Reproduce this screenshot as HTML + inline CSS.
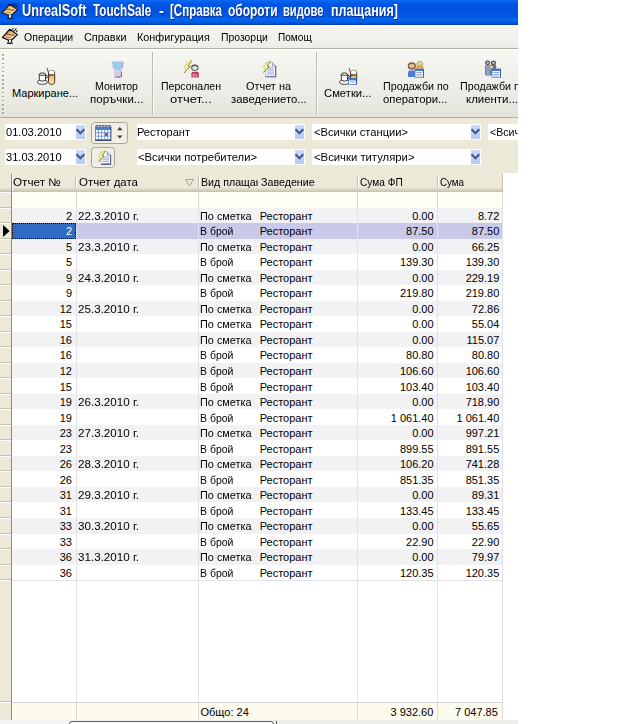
<!DOCTYPE html>
<html><head><meta charset="utf-8"><title>UnrealSoft TouchSale</title>
<style>
html,body{margin:0;padding:0;background:#fff;}
body{width:640px;height:724px;position:relative;overflow:hidden;font-family:"Liberation Sans",sans-serif;}
.b{position:absolute;box-sizing:border-box;}
.t{position:absolute;white-space:pre;line-height:1;font-family:"Liberation Sans",sans-serif;}
svg{position:absolute;overflow:visible;}
</style></head><body>

<div class="b" style="left:0px;top:0px;width:518px;height:25px;background:linear-gradient(to bottom,#0b6bf6 0px,#0560ea 2px,#0055e5 4px,#0052e0 10px,#0158e6 16px,#0366ee 20px,#0058de 22.5px,#003dba 25px);"></div>
<span class="t" style="left:21.50px;top:2.96px;font-size:16px;color:#fff;font-weight:bold;transform:scaleX(0.7972);transform-origin:0 0;text-shadow:1px 1px 0 #0a2a8a;">UnrealSoft</span>
<span class="t" style="left:92.80px;top:2.96px;font-size:16px;color:#fff;font-weight:bold;transform:scaleX(0.7301);transform-origin:0 0;text-shadow:1px 1px 0 #0a2a8a;">TouchSale</span>
<span class="t" style="left:159.00px;top:2.96px;font-size:16px;color:#fff;font-weight:bold;transform:scaleX(0.9384);transform-origin:0 0;text-shadow:1px 1px 0 #0a2a8a;">-</span>
<span class="t" style="left:170.00px;top:2.96px;font-size:16px;color:#fff;font-weight:bold;transform:scaleX(0.7225);transform-origin:0 0;text-shadow:1px 1px 0 #0a2a8a;">[Справка</span>
<span class="t" style="left:227.50px;top:2.96px;font-size:16px;color:#fff;font-weight:bold;transform:scaleX(0.7472);transform-origin:0 0;text-shadow:1px 1px 0 #0a2a8a;">обороти</span>
<span class="t" style="left:283.00px;top:2.96px;font-size:16px;color:#fff;font-weight:bold;transform:scaleX(0.6968);transform-origin:0 0;text-shadow:1px 1px 0 #0a2a8a;">видове</span>
<span class="t" style="left:330.60px;top:2.96px;font-size:16px;color:#fff;font-weight:bold;transform:scaleX(0.7826);transform-origin:0 0;text-shadow:1px 1px 0 #0a2a8a;">плащания]</span>
<div class="b" style="left:0px;top:25px;width:518px;height:23px;background:linear-gradient(to bottom,#fbfaf6 0px,#f3f2ec 3px,#f0efe9 20px,#eceae0 23px);"></div>
<div class="b" style="left:0px;top:25px;width:518px;height:1px;background:#f6ffff;"></div>
<div class="b" style="left:0px;top:47.6px;width:518px;height:1px;background:#b2b0a4;"></div>
<div class="b" style="left:0px;top:48.5px;width:518px;height:1px;background:#fff;"></div>
<span class="t" style="left:24.00px;top:32.09px;font-size:11px;color:#000;transform:scaleX(0.9569);transform-origin:0 0;">Операции</span>
<span class="t" style="left:83.75px;top:32.09px;font-size:11px;color:#000;transform:scaleX(0.9898);transform-origin:0 0;">Справки</span>
<span class="t" style="left:136.90px;top:32.09px;font-size:11px;color:#000;transform:scaleX(0.9861);transform-origin:0 0;">Конфигурация</span>
<span class="t" style="left:220.60px;top:32.09px;font-size:11px;color:#000;transform:scaleX(0.9451);transform-origin:0 0;">Прозорци</span>
<span class="t" style="left:277.50px;top:32.09px;font-size:11px;color:#000;transform:scaleX(0.9180);transform-origin:0 0;">Помощ</span>
<div class="b" style="left:0px;top:49.5px;width:518px;height:67.5px;background:linear-gradient(to bottom,#f7f7f3 0px,#f2f2ed 20px,#ebebe5 48px,#e2e2d8 67px);"></div>
<div class="b" style="left:0px;top:116.8px;width:518px;height:1px;background:#b3b09d;"></div>
<div class="b" style="left:0px;top:117.8px;width:518px;height:55.2px;background:#ece9d8;"></div>
<div class="b" style="left:2.4px;top:54.2px;width:1.6px;height:1.6px;background:#a9a79b;box-shadow:0.7px 0.7px 0 #fff;"></div>
<div class="b" style="left:2.4px;top:58.35px;width:1.6px;height:1.6px;background:#a9a79b;box-shadow:0.7px 0.7px 0 #fff;"></div>
<div class="b" style="left:2.4px;top:62.5px;width:1.6px;height:1.6px;background:#a9a79b;box-shadow:0.7px 0.7px 0 #fff;"></div>
<div class="b" style="left:2.4px;top:66.65px;width:1.6px;height:1.6px;background:#a9a79b;box-shadow:0.7px 0.7px 0 #fff;"></div>
<div class="b" style="left:2.4px;top:70.80000000000001px;width:1.6px;height:1.6px;background:#a9a79b;box-shadow:0.7px 0.7px 0 #fff;"></div>
<div class="b" style="left:2.4px;top:74.95px;width:1.6px;height:1.6px;background:#a9a79b;box-shadow:0.7px 0.7px 0 #fff;"></div>
<div class="b" style="left:2.4px;top:79.10000000000001px;width:1.6px;height:1.6px;background:#a9a79b;box-shadow:0.7px 0.7px 0 #fff;"></div>
<div class="b" style="left:2.4px;top:83.25px;width:1.6px;height:1.6px;background:#a9a79b;box-shadow:0.7px 0.7px 0 #fff;"></div>
<div class="b" style="left:2.4px;top:87.4px;width:1.6px;height:1.6px;background:#a9a79b;box-shadow:0.7px 0.7px 0 #fff;"></div>
<div class="b" style="left:2.4px;top:91.55000000000001px;width:1.6px;height:1.6px;background:#a9a79b;box-shadow:0.7px 0.7px 0 #fff;"></div>
<div class="b" style="left:2.4px;top:95.7px;width:1.6px;height:1.6px;background:#a9a79b;box-shadow:0.7px 0.7px 0 #fff;"></div>
<div class="b" style="left:2.4px;top:99.85000000000001px;width:1.6px;height:1.6px;background:#a9a79b;box-shadow:0.7px 0.7px 0 #fff;"></div>
<div class="b" style="left:2.4px;top:104.0px;width:1.6px;height:1.6px;background:#a9a79b;box-shadow:0.7px 0.7px 0 #fff;"></div>
<div class="b" style="left:2.4px;top:108.15px;width:1.6px;height:1.6px;background:#a9a79b;box-shadow:0.7px 0.7px 0 #fff;"></div>
<div class="b" style="left:2.4px;top:112.30000000000001px;width:1.6px;height:1.6px;background:#a9a79b;box-shadow:0.7px 0.7px 0 #fff;"></div>
<div class="b" style="left:151.9px;top:51.5px;width:1px;height:63px;background:#bcbbb1;"></div>
<div class="b" style="left:152.9px;top:51.5px;width:1px;height:63px;background:#fdfdfb;"></div>
<div class="b" style="left:315.9px;top:51.5px;width:1px;height:63px;background:#bcbbb1;"></div>
<div class="b" style="left:316.9px;top:51.5px;width:1px;height:63px;background:#fdfdfb;"></div>
<span class="t" style="left:12.00px;top:87.69px;font-size:11px;color:#000;">Маркиране...</span>
<span class="t" style="left:95.00px;top:80.99px;font-size:11px;color:#000;transform:scaleX(0.9602);transform-origin:0 0;">Монитор</span>
<span class="t" style="left:89.50px;top:93.69px;font-size:11px;color:#000;transform:scaleX(1.0503);transform-origin:0 0;">поръчки...</span>
<span class="t" style="left:160.50px;top:80.99px;font-size:11px;color:#000;transform:scaleX(0.9571);transform-origin:0 0;">Персонален</span>
<span class="t" style="left:169.50px;top:93.69px;font-size:11px;color:#000;transform:scaleX(1.1797);transform-origin:0 0;">отчет...</span>
<span class="t" style="left:246.25px;top:80.99px;font-size:11px;color:#000;transform:scaleX(0.9917);transform-origin:0 0;">Отчет на</span>
<span class="t" style="left:230.50px;top:93.69px;font-size:11px;color:#000;transform:scaleX(1.0311);transform-origin:0 0;">заведението...</span>
<span class="t" style="left:323.75px;top:87.69px;font-size:11px;color:#000;transform:scaleX(1.0229);transform-origin:0 0;">Сметки...</span>
<span class="t" style="left:383.00px;top:80.99px;font-size:11px;color:#000;transform:scaleX(0.9741);transform-origin:0 0;">Продажби по</span>
<span class="t" style="left:383.00px;top:93.69px;font-size:11px;color:#000;transform:scaleX(1.0294);transform-origin:0 0;">оператори...</span>
<div class="b" style="left:440px;top:50px;width:78px;height:66px;overflow:hidden;">
<span class="t" style="left:20.00px;top:30.99px;font-size:11px;color:#000;transform:scaleX(0.9741);transform-origin:0 0;">Продажби по</span>
<span class="t" style="left:25.80px;top:43.69px;font-size:11px;color:#000;transform:scaleX(1.0390);transform-origin:0 0;">клиенти...</span>
</div>
<div class="b" style="left:5px;top:124px;width:81.3px;height:16px;background:#fff;"></div><div class="b" style="left:76.3px;top:125px;width:8.8px;height:13.7px;background:linear-gradient(to bottom,#cbd9fa,#b9caf4);"></div><svg style="left:76.3px;top:124px" width="9" height="16" viewBox="0 0 9 16"><path d="M0.5 5.3 L4.4 9.3 L8.3 5.3" fill="none" stroke="#44588a" stroke-width="2.1"/></svg><span class="t" style="left:5.80px;top:126.89px;font-size:11px;color:#000;transform:scaleX(1.0098);transform-origin:0 0;">01.03.2010</span>
<div class="b" style="left:5px;top:149px;width:81.3px;height:16px;background:#fff;"></div><div class="b" style="left:76.3px;top:150px;width:8.8px;height:13.7px;background:linear-gradient(to bottom,#cbd9fa,#b9caf4);"></div><svg style="left:76.3px;top:149px" width="9" height="16" viewBox="0 0 9 16"><path d="M0.5 5.3 L4.4 9.3 L8.3 5.3" fill="none" stroke="#44588a" stroke-width="2.1"/></svg><span class="t" style="left:5.80px;top:151.89px;font-size:11px;color:#000;transform:scaleX(1.0098);transform-origin:0 0;">31.03.2010</span>
<div class="b" style="left:137px;top:124px;width:168px;height:16px;background:#fff;"></div><div class="b" style="left:295px;top:125px;width:8.8px;height:13.7px;background:linear-gradient(to bottom,#cbd9fa,#b9caf4);"></div><svg style="left:295px;top:124px" width="9" height="16" viewBox="0 0 9 16"><path d="M0.5 5.3 L4.4 9.3 L8.3 5.3" fill="none" stroke="#44588a" stroke-width="2.1"/></svg><span class="t" style="left:136.80px;top:126.89px;font-size:11px;color:#000;transform:scaleX(1.0027);transform-origin:0 0;">Ресторант</span>
<div class="b" style="left:137px;top:149px;width:168px;height:16px;background:#fff;"></div><div class="b" style="left:295px;top:150px;width:8.8px;height:13.7px;background:linear-gradient(to bottom,#cbd9fa,#b9caf4);"></div><svg style="left:295px;top:149px" width="9" height="16" viewBox="0 0 9 16"><path d="M0.5 5.3 L4.4 9.3 L8.3 5.3" fill="none" stroke="#44588a" stroke-width="2.1"/></svg><span class="t" style="left:137.50px;top:151.89px;font-size:11px;color:#000;transform:scaleX(1.0238);transform-origin:0 0;">&lt;Всички потребители&gt;</span>
<div class="b" style="left:312px;top:124px;width:169.2px;height:16px;background:#fff;"></div><div class="b" style="left:471.2px;top:125px;width:8.8px;height:13.7px;background:linear-gradient(to bottom,#cbd9fa,#b9caf4);"></div><svg style="left:471.2px;top:124px" width="9" height="16" viewBox="0 0 9 16"><path d="M0.5 5.3 L4.4 9.3 L8.3 5.3" fill="none" stroke="#44588a" stroke-width="2.1"/></svg><span class="t" style="left:313.50px;top:126.89px;font-size:11px;color:#000;transform:scaleX(1.0131);transform-origin:0 0;">&lt;Всички станции&gt;</span>
<div class="b" style="left:312px;top:149px;width:169.2px;height:16px;background:#fff;"></div><div class="b" style="left:471.2px;top:150px;width:8.8px;height:13.7px;background:linear-gradient(to bottom,#cbd9fa,#b9caf4);"></div><svg style="left:471.2px;top:149px" width="9" height="16" viewBox="0 0 9 16"><path d="M0.5 5.3 L4.4 9.3 L8.3 5.3" fill="none" stroke="#44588a" stroke-width="2.1"/></svg><span class="t" style="left:313.50px;top:151.89px;font-size:11px;color:#000;transform:scaleX(1.0273);transform-origin:0 0;">&lt;Всички титуляри&gt;</span>
<div class="b" style="left:488px;top:124px;width:30px;height:16px;overflow:hidden;background:#fff;"><span class="t" style="left:1.70px;top:2.89px;font-size:11px;color:#000;transform:scaleX(0.9621);transform-origin:0 0;">&lt;Всички</span></div>
<div class="b" style="left:91px;top:122px;width:36.5px;height:22px;border:1px solid #a9a697;border-radius:3.5px;background:#f1efe5;"></div>
<div class="b" style="left:91px;top:147.3px;width:23.5px;height:21px;border:1px solid #a9a697;border-radius:3.5px;background:#f1efe5;"></div>
<svg style="left:0px;top:0px;" width="20" height="20" viewBox="0 0 20 20"><defs><linearGradient id="gg1" x1="0" y1="0" x2="0.6" y2="1"><stop offset="0" stop-color="#e89018"/><stop offset="0.45" stop-color="#f4c060"/><stop offset="1" stop-color="#fff4d8"/></linearGradient></defs><path d="M2.3 12.6 L9.6 4.3 L17.4 9.6 L11.6 15 L8 15 Z" fill="url(#gg1)" stroke="#101030" stroke-width="1.1" stroke-linejoin="round"/><path d="M5 10.2 Q7.5 8.3 9.6 9.6 T14.4 9.6" fill="none" stroke="#9a5a10" stroke-width="1.2"/><path d="M6.2 12.2 Q8.5 13.4 11 12" fill="none" stroke="#9a5a10" stroke-width="0.8"/><rect x="8.6" y="15" width="2.6" height="3" fill="#fff"/><path d="M8.4 15 V17.2 M11.4 15 V17.2" stroke="#101030" stroke-width="1"/><path d="M7 18.2 H12.8" stroke="#101030" stroke-width="1.3"/><path d="M11.3 5.4 L13.5 3.1 M13.8 6.2 L16.6 3.2 M16 7.2 L17.7 5.3" stroke="#101030" stroke-width="1.05" stroke-dasharray="1.6 0.35"/></svg>
<svg style="left:0px;top:25.3px;" width="20" height="20" viewBox="0 0 20 20"><defs><linearGradient id="gg2" x1="0" y1="0" x2="0.6" y2="1"><stop offset="0" stop-color="#a87030"/><stop offset="0.45" stop-color="#ddb47c"/><stop offset="1" stop-color="#fbe8d0"/></linearGradient></defs><path d="M2.3 12.6 L9.6 4.3 L17.4 9.6 L11.6 15 L8 15 Z" fill="url(#gg2)" stroke="#000" stroke-width="1.1" stroke-linejoin="round"/><path d="M5 10.2 Q7.5 8.3 9.6 9.6 T14.4 9.6" fill="none" stroke="#8a5a20" stroke-width="1.2"/><path d="M6.2 12.2 Q8.5 13.4 11 12" fill="none" stroke="#8a5a20" stroke-width="0.8"/><rect x="8.6" y="15" width="2.6" height="3" fill="#fff"/><path d="M8.4 15 V17.2 M11.4 15 V17.2" stroke="#000" stroke-width="1"/><path d="M7 18.2 H12.8" stroke="#000" stroke-width="1.3"/><path d="M11.3 5.4 L13.5 3.1 M13.8 6.2 L16.6 3.2 M16 7.2 L17.7 5.3" stroke="#000" stroke-width="1.05" stroke-dasharray="1.6 0.35"/></svg>
<svg style="left:32px;top:62px;" width="24" height="24" viewBox="0 0 24 24"><defs><linearGradient id="gla" x1="0" y1="0" x2="0" y2="1"><stop offset="0" stop-color="#e89a38"/><stop offset="1" stop-color="#fde8b8"/></linearGradient></defs><ellipse cx="10.4" cy="20.1" rx="4.9" ry="2.2" fill="#fbfbfb" stroke="#222" stroke-width="0.85"/><path d="M7.3 12.2 V17.3 Q7.3 19.1 10.4 19.1 Q13.5 19.1 13.5 17.3 V12.2" fill="#fff" stroke="#222" stroke-width="0.9"/><ellipse cx="10.4" cy="12.2" rx="3.1" ry="1.25" fill="#f4f4f4" stroke="#222" stroke-width="0.9"/><path d="M13.6 13.2 Q15.6 13.2 15.4 14.8 Q15.2 16.2 13.6 16.2" fill="none" stroke="#222" stroke-width="0.9"/><rect x="16.5" y="8.3" width="6.2" height="14.2" rx="3" fill="url(#gla)" stroke="#2a2418" stroke-width="0.9"/><path d="M17 12.4 V9.5 Q19.6 7 22.2 9.5 V12.4 Z" fill="#fff"/><path d="M17.4 13 H21.8" stroke="#333" stroke-width="1.2"/><path d="M15 6 L17.6 14.3" stroke="#6a3048" stroke-width="0.9"/></svg>
<svg style="left:101px;top:54px;filter:blur(0.35px);" width="30" height="30" viewBox="0 0 30 30"><defs><radialGradient id="mon" cx="0.5" cy="0.45" r="0.6"><stop offset="0" stop-color="#86d4f8"/><stop offset="0.55" stop-color="#a0c6ea"/><stop offset="1" stop-color="#b0bce0"/></radialGradient></defs><path d="M10.9 7.5 H21.9 L21.5 14 Q21 16.4 18.6 16.7 H15 Q12.6 16.3 12 14 Z" fill="url(#mon)" stroke="#ccd8ee" stroke-width="0.8"/><path d="M21.9 7.8 L21.5 13.6" stroke="#8890bc" stroke-width="0.8"/><path d="M12.8 17 H20.6 V22.6 Q17 24 13.6 22.8 Z" fill="#d4cce8"/><path d="M20.4 17.5 V22.4 Q17 23.9 13.6 22.8" fill="none" stroke="#7c7298" stroke-width="1.1"/></svg>
<svg style="left:175px;top:54px;filter:blur(0.3px);" width="30" height="30" viewBox="0 0 30 30"><path d="M15.30 6.00 L16.90 6.70 L13.10 12.00 L15.30 12.50 L9.10 19.00 L10.70 13.90 L8.30 13.30 Z" fill="#f8f29c" stroke="#c2b660" stroke-width="0.5" stroke-linejoin="round"/><path d="M16.90 6.70 L13.10 12.00 L15.30 12.50 L9.10 19.00" fill="none" stroke="#7c7230" stroke-width="0.8" stroke-linejoin="round"/><ellipse cx="19.8" cy="13.8" rx="3.2" ry="2.7" fill="#e8e8e8" stroke="#707070" stroke-width="1.2"/><path d="M16.8 12.6 Q19.8 10 22.8 12.6" fill="none" stroke="#606060" stroke-width="1.4"/><path d="M16.4 23.4 V19.6 Q16.4 17.8 18.2 17.8 H21.8 Q23.8 17.8 23.8 19.6 V23.4 Z" fill="#c23456"/><path d="M18 20 H20 V22.4 H18 Z M21.6 20 V23" fill="none" stroke="#f0a8b8" stroke-width="0.9"/></svg>
<svg style="left:255px;top:54px;filter:blur(0.3px);" width="30" height="30" viewBox="0 0 30 30"><path d="M10.5 8.6 H17.5 L20.7 11.8 V22.799999999999997 H10.5 Z" fill="#f4f7fd" stroke="#b4bcd4" stroke-width="0.8" stroke-linejoin="round"/><path d="M17.5 8.6 V11.8 H20.7" fill="#c8d0e4" stroke="#7c86a4" stroke-width="0.7"/><rect x="12.1" y="13.40" width="6.999999999999999" height="0.9" fill="#8c9cc8"/><rect x="12.1" y="15.50" width="6.999999999999999" height="0.9" fill="#8c9cc8"/><rect x="12.1" y="17.60" width="6.999999999999999" height="0.9" fill="#8c9cc8"/><rect x="12.1" y="19.70" width="6.999999999999999" height="0.9" fill="#8c9cc8"/><path d="M10.5 22.799999999999997 H20.7 V11.8" fill="none" stroke="#5a6484" stroke-width="1.1"/><path d="M14.24 6.60 L15.71 7.24 L12.22 12.12 L14.24 12.58 L8.54 18.56 L10.01 13.87 L7.80 13.32 Z" fill="#f8f29c" stroke="#c2b660" stroke-width="0.5" stroke-linejoin="round"/><path d="M15.71 7.24 L12.22 12.12 L14.24 12.58 L8.54 18.56" fill="none" stroke="#7c7230" stroke-width="0.8" stroke-linejoin="round"/></svg>
<svg style="left:334px;top:62px;" width="24" height="24" viewBox="0 0 24 24"><defs><linearGradient id="glb" x1="0" y1="0" x2="0" y2="1"><stop offset="0" stop-color="#e89a38"/><stop offset="1" stop-color="#fde8b8"/></linearGradient></defs><ellipse cx="10.4" cy="20.1" rx="4.9" ry="2.2" fill="#fbfbfb" stroke="#222" stroke-width="0.85"/><path d="M7.3 12.2 V17.3 Q7.3 19.1 10.4 19.1 Q13.5 19.1 13.5 17.3 V12.2" fill="#fff" stroke="#222" stroke-width="0.9"/><ellipse cx="10.4" cy="12.2" rx="3.1" ry="1.25" fill="#f4f4f4" stroke="#222" stroke-width="0.9"/><path d="M13.6 13.2 Q15.6 13.2 15.4 14.8 Q15.2 16.2 13.6 16.2" fill="none" stroke="#222" stroke-width="0.9"/><rect x="16.5" y="8.3" width="6.2" height="14.2" rx="3" fill="url(#glb)" stroke="#2a2418" stroke-width="0.9"/><path d="M17 12.4 V9.5 Q19.6 7 22.2 9.5 V12.4 Z" fill="#fff"/><path d="M17.4 13 H21.8" stroke="#333" stroke-width="1.2"/><path d="M15 6 L17.6 14.3" stroke="#6a3048" stroke-width="0.9"/><rect x="14.2" y="16" width="8.5" height="6.8" fill="#4377cc"/><rect x="15.0" y="18.4" width="6.9" height="3.8" fill="#fff"/><rect x="15.899999999999999" y="19.50" width="5.1" height="0.85" fill="#7f98d0"/><rect x="21.9" y="17.2" width="0.8" height="5.6" fill="#2f559e"/></svg>
<svg style="left:401px;top:54px;filter:blur(0.3px);" width="30" height="30" viewBox="0 0 30 30"><ellipse cx="18.8" cy="9.9" rx="3.2" ry="2.6" fill="#d8d0a8" stroke="#b0a880" stroke-width="0.8"/><path d="M15.2 14.6 V12.8 Q15.2 11.6 16.6 11.6 H21 Q22.4 11.6 22.4 12.8 V14.6 Z" fill="#f0a030"/><ellipse cx="10.8" cy="12" rx="3.4" ry="3" fill="#d4b484" stroke="#7a5c50" stroke-width="1.4"/><path d="M8.6 11.6 H13" stroke="#f0dcb0" stroke-width="1"/><path d="M7 23 V18.4 Q7 16.6 9 16.6 H12.6 Q14.4 16.6 14.4 18.4 V23 Z" fill="#4f7fd4"/><rect x="13.6" y="14.6" width="9.4" height="9" fill="#4377cc"/><rect x="14.4" y="17.0" width="7.800000000000001" height="6.0" fill="#fff"/><rect x="15.299999999999999" y="18.10" width="6.0" height="0.85" fill="#7f98d0"/><rect x="15.299999999999999" y="19.85" width="6.0" height="0.85" fill="#7f98d0"/><rect x="15.299999999999999" y="21.60" width="6.0" height="0.85" fill="#7f98d0"/><rect x="22.2" y="15.799999999999999" width="0.8" height="7.8" fill="#2f559e"/></svg>
<svg style="left:478px;top:54px;filter:blur(0.3px);" width="30" height="30" viewBox="0 0 30 30"><rect x="7.2" y="10" width="5" height="12" rx="1.8" fill="#939bd4"/><path d="M7.4 11.5 V21" stroke="#60648c" stroke-width="0.8"/><rect x="12.8" y="10" width="5.4" height="12" rx="1.8" fill="#7a64a2"/><ellipse cx="9.7" cy="8.8" rx="2" ry="1.7" fill="#c4c4cc" stroke="#54545e" stroke-width="1.2"/><ellipse cx="15.5" cy="8.8" rx="2" ry="1.7" fill="#c4c4cc" stroke="#54545e" stroke-width="1.2"/><path d="M12.3 11 V21.5" stroke="#4c4c68" stroke-width="0.7"/><rect x="12.4" y="11.8" width="2.4" height="2.6" fill="#f2e264"/><rect x="12.4" y="14.4" width="1.8" height="2.8" fill="#62b66c"/><rect x="13.6" y="14.6" width="9.4" height="9" fill="#4377cc"/><rect x="14.4" y="17.0" width="7.800000000000001" height="6.0" fill="#fff"/><rect x="15.299999999999999" y="18.10" width="6.0" height="0.85" fill="#7f98d0"/><rect x="15.299999999999999" y="19.85" width="6.0" height="0.85" fill="#7f98d0"/><rect x="15.299999999999999" y="21.60" width="6.0" height="0.85" fill="#7f98d0"/><rect x="22.2" y="15.799999999999999" width="0.8" height="7.8" fill="#2f559e"/></svg>
<svg style="left:95px;top:124.7px;" width="17" height="16" viewBox="0 0 17 16"><defs><linearGradient id="cal" x1="0" y1="0" x2="0" y2="1"><stop offset="0" stop-color="#4c74c4"/><stop offset="1" stop-color="#7aa0e0"/></linearGradient></defs><rect x="0" y="1.2" width="16.2" height="14.4" fill="url(#cal)"/><rect x="0.6" y="0" width="15" height="1.4" fill="#fff"/><path d="M0.8 0.6 H15.6" stroke="#000" stroke-width="1.1" stroke-dasharray="0.8 0.72"/><rect x="1.00" y="5.00" width="2.2" height="2.4" fill="#fff"/><rect x="4.05" y="5.00" width="2.2" height="2.4" fill="#fff"/><rect x="7.10" y="5.00" width="2.2" height="2.4" fill="#fff"/><rect x="10.15" y="5.00" width="2.2" height="2.4" fill="#fff"/><rect x="13.20" y="5.00" width="2.2" height="2.4" fill="#fff"/><rect x="1.00" y="8.30" width="2.2" height="2.4" fill="#fff"/><rect x="4.05" y="8.30" width="2.2" height="2.4" fill="#fff"/><rect x="7.10" y="8.30" width="2.2" height="2.4" fill="#fff"/><rect x="10.15" y="8.30" width="2.2" height="2.4" fill="#e02818"/><rect x="13.20" y="8.30" width="2.2" height="2.4" fill="#fff"/><rect x="1.00" y="11.60" width="2.2" height="2.4" fill="#fff"/><rect x="4.05" y="11.60" width="2.2" height="2.4" fill="#fff"/><rect x="7.10" y="11.60" width="2.2" height="2.4" fill="#fff"/><rect x="10.15" y="11.60" width="2.2" height="2.4" fill="#fff"/><rect x="13.20" y="11.60" width="2.2" height="2.4" fill="#fff"/><rect x="0" y="14.8" width="16.2" height="1" fill="#1c2c5c"/><rect x="15.6" y="1.4" width="0.7" height="14" fill="#2c4484"/></svg>
<svg style="left:116px;top:126px" width="8" height="14" viewBox="0 0 8 14"><path d="M1 4.2 L3.8 1 L6.6 4.2 Z M1 9.4 L3.8 12.6 L6.6 9.4 Z" fill="#44402c"/></svg>
<svg style="left:96px;top:148px;" width="20" height="20" viewBox="0 0 20 20"><path d="M5 3.8 H11.399999999999999 L14.6 7.0 V16.4 H5 Z" fill="#f4f7fd" stroke="#b4bcd4" stroke-width="0.8" stroke-linejoin="round"/><path d="M11.399999999999999 3.8 V7.0 H14.6" fill="#c8d0e4" stroke="#7c86a4" stroke-width="0.7"/><rect x="6.6" y="8.60" width="6.3999999999999995" height="0.9" fill="#8c9cc8"/><rect x="6.6" y="10.70" width="6.3999999999999995" height="0.9" fill="#8c9cc8"/><rect x="6.6" y="12.80" width="6.3999999999999995" height="0.9" fill="#8c9cc8"/><rect x="6.6" y="14.90" width="6.3999999999999995" height="0.9" fill="#8c9cc8"/><path d="M5 16.4 H14.6 V7.0" fill="none" stroke="#5a6484" stroke-width="1.1"/><path d="M8.02 2.40 L9.40 3.00 L6.13 7.56 L8.02 7.99 L2.69 13.58 L4.06 9.19 L2.00 8.68 Z" fill="#f8f29c" stroke="#c2b660" stroke-width="0.5" stroke-linejoin="round"/><path d="M9.40 3.00 L6.13 7.56 L8.02 7.99 L2.69 13.58" fill="none" stroke="#7c7230" stroke-width="0.8" stroke-linejoin="round"/></svg>
<div class="b" style="left:0px;top:173px;width:518px;height:551px;background:#fff;"></div>
<div class="b" style="left:0px;top:173px;width:502.5px;height:18.5px;background:linear-gradient(to bottom,#d8d5c4 0px,#f1efe2 0.8px,#ece9d8 2.5px,#ece9d8 14.5px,#e2decd 15.5px,#d6d2c2 17px,#c9c5b4 18.5px);"></div>
<div class="b" style="left:0px;top:191.5px;width:12px;height:528.2px;background:#ece9d8;"></div>
<div class="b" style="left:12px;top:191.5px;width:490.5px;height:16.1px;background:#fffef3;"></div>
<div class="b" style="left:12px;top:207.6px;width:490.5px;height:15.52px;background:#f2f2f4;"></div>
<span class="t" style="left:65.88px;top:210.79px;font-size:11px;color:#000;">2</span>
<span class="t" style="left:77.90px;top:210.79px;font-size:11px;color:#000;transform:scaleX(1.0568);transform-origin:0 0;">22.3.2010 г.</span>
<span class="t" style="left:199.60px;top:210.79px;font-size:11px;color:#000;transform:scaleX(0.9902);transform-origin:0 0;">По сметка</span>
<span class="t" style="left:259.70px;top:210.79px;font-size:11px;color:#000;">Ресторант</span>
<span class="t" style="left:412.18px;top:210.79px;font-size:11px;color:#000;">0.00</span>
<span class="t" style="left:477.88px;top:210.79px;font-size:11px;color:#000;">8.72</span>
<div class="b" style="left:12px;top:223.12px;width:490.5px;height:15.52px;background:#c9c9e9;"></div>
<div class="b" style="left:11.8px;top:222.92000000000002px;width:64.4px;height:15.82px;background:#316ac5;outline:1px dotted #000;outline-offset:-1px;"></div>
<span class="t" style="left:65.88px;top:226.31px;font-size:11px;color:#fff;">2</span>
<span class="t" style="left:199.60px;top:226.31px;font-size:11px;color:#000;transform:scaleX(0.9522);transform-origin:0 0;">В брой</span>
<span class="t" style="left:259.70px;top:226.31px;font-size:11px;color:#000;">Ресторант</span>
<span class="t" style="left:406.07px;top:226.31px;font-size:11px;color:#000;">87.50</span>
<span class="t" style="left:471.77px;top:226.31px;font-size:11px;color:#000;">87.50</span>
<div class="b" style="left:12px;top:238.64px;width:490.5px;height:15.52px;background:#f2f2f4;"></div>
<span class="t" style="left:65.88px;top:241.83px;font-size:11px;color:#000;">5</span>
<span class="t" style="left:77.90px;top:241.83px;font-size:11px;color:#000;transform:scaleX(1.0568);transform-origin:0 0;">23.3.2010 г.</span>
<span class="t" style="left:199.60px;top:241.83px;font-size:11px;color:#000;transform:scaleX(0.9902);transform-origin:0 0;">По сметка</span>
<span class="t" style="left:259.70px;top:241.83px;font-size:11px;color:#000;">Ресторант</span>
<span class="t" style="left:412.18px;top:241.83px;font-size:11px;color:#000;">0.00</span>
<span class="t" style="left:471.77px;top:241.83px;font-size:11px;color:#000;">66.25</span>
<span class="t" style="left:65.88px;top:257.35px;font-size:11px;color:#000;">5</span>
<span class="t" style="left:199.60px;top:257.35px;font-size:11px;color:#000;transform:scaleX(0.9522);transform-origin:0 0;">В брой</span>
<span class="t" style="left:259.70px;top:257.35px;font-size:11px;color:#000;">Ресторант</span>
<span class="t" style="left:399.94px;top:257.35px;font-size:11px;color:#000;">139.30</span>
<span class="t" style="left:465.64px;top:257.35px;font-size:11px;color:#000;">139.30</span>
<div class="b" style="left:12px;top:269.68px;width:490.5px;height:15.52px;background:#f2f2f4;"></div>
<span class="t" style="left:65.88px;top:272.87px;font-size:11px;color:#000;">9</span>
<span class="t" style="left:77.90px;top:272.87px;font-size:11px;color:#000;transform:scaleX(1.0568);transform-origin:0 0;">24.3.2010 г.</span>
<span class="t" style="left:199.60px;top:272.87px;font-size:11px;color:#000;transform:scaleX(0.9902);transform-origin:0 0;">По сметка</span>
<span class="t" style="left:259.70px;top:272.87px;font-size:11px;color:#000;">Ресторант</span>
<span class="t" style="left:412.18px;top:272.87px;font-size:11px;color:#000;">0.00</span>
<span class="t" style="left:465.64px;top:272.87px;font-size:11px;color:#000;">229.19</span>
<span class="t" style="left:65.88px;top:288.39px;font-size:11px;color:#000;">9</span>
<span class="t" style="left:199.60px;top:288.39px;font-size:11px;color:#000;transform:scaleX(0.9522);transform-origin:0 0;">В брой</span>
<span class="t" style="left:259.70px;top:288.39px;font-size:11px;color:#000;">Ресторант</span>
<span class="t" style="left:399.94px;top:288.39px;font-size:11px;color:#000;">219.80</span>
<span class="t" style="left:465.64px;top:288.39px;font-size:11px;color:#000;">219.80</span>
<div class="b" style="left:12px;top:300.72px;width:490.5px;height:15.52px;background:#f2f2f4;"></div>
<span class="t" style="left:59.75px;top:303.91px;font-size:11px;color:#000;">12</span>
<span class="t" style="left:77.90px;top:303.91px;font-size:11px;color:#000;transform:scaleX(1.0568);transform-origin:0 0;">25.3.2010 г.</span>
<span class="t" style="left:199.60px;top:303.91px;font-size:11px;color:#000;transform:scaleX(0.9902);transform-origin:0 0;">По сметка</span>
<span class="t" style="left:259.70px;top:303.91px;font-size:11px;color:#000;">Ресторант</span>
<span class="t" style="left:412.18px;top:303.91px;font-size:11px;color:#000;">0.00</span>
<span class="t" style="left:471.77px;top:303.91px;font-size:11px;color:#000;">72.86</span>
<span class="t" style="left:59.75px;top:319.43px;font-size:11px;color:#000;">15</span>
<span class="t" style="left:199.60px;top:319.43px;font-size:11px;color:#000;transform:scaleX(0.9902);transform-origin:0 0;">По сметка</span>
<span class="t" style="left:259.70px;top:319.43px;font-size:11px;color:#000;">Ресторант</span>
<span class="t" style="left:412.18px;top:319.43px;font-size:11px;color:#000;">0.00</span>
<span class="t" style="left:471.77px;top:319.43px;font-size:11px;color:#000;">55.04</span>
<div class="b" style="left:12px;top:331.76px;width:490.5px;height:15.52px;background:#f2f2f4;"></div>
<span class="t" style="left:59.75px;top:334.95px;font-size:11px;color:#000;">16</span>
<span class="t" style="left:199.60px;top:334.95px;font-size:11px;color:#000;transform:scaleX(0.9902);transform-origin:0 0;">По сметка</span>
<span class="t" style="left:259.70px;top:334.95px;font-size:11px;color:#000;">Ресторант</span>
<span class="t" style="left:412.18px;top:334.95px;font-size:11px;color:#000;">0.00</span>
<span class="t" style="left:466.47px;top:334.95px;font-size:11px;color:#000;">115.07</span>
<span class="t" style="left:59.75px;top:350.47px;font-size:11px;color:#000;">16</span>
<span class="t" style="left:199.60px;top:350.47px;font-size:11px;color:#000;transform:scaleX(0.9522);transform-origin:0 0;">В брой</span>
<span class="t" style="left:259.70px;top:350.47px;font-size:11px;color:#000;">Ресторант</span>
<span class="t" style="left:406.07px;top:350.47px;font-size:11px;color:#000;">80.80</span>
<span class="t" style="left:471.77px;top:350.47px;font-size:11px;color:#000;">80.80</span>
<div class="b" style="left:12px;top:362.79999999999995px;width:490.5px;height:15.52px;background:#f2f2f4;"></div>
<span class="t" style="left:59.75px;top:365.99px;font-size:11px;color:#000;">12</span>
<span class="t" style="left:199.60px;top:365.99px;font-size:11px;color:#000;transform:scaleX(0.9522);transform-origin:0 0;">В брой</span>
<span class="t" style="left:259.70px;top:365.99px;font-size:11px;color:#000;">Ресторант</span>
<span class="t" style="left:399.94px;top:365.99px;font-size:11px;color:#000;">106.60</span>
<span class="t" style="left:465.64px;top:365.99px;font-size:11px;color:#000;">106.60</span>
<span class="t" style="left:59.75px;top:381.51px;font-size:11px;color:#000;">15</span>
<span class="t" style="left:199.60px;top:381.51px;font-size:11px;color:#000;transform:scaleX(0.9522);transform-origin:0 0;">В брой</span>
<span class="t" style="left:259.70px;top:381.51px;font-size:11px;color:#000;">Ресторант</span>
<span class="t" style="left:399.94px;top:381.51px;font-size:11px;color:#000;">103.40</span>
<span class="t" style="left:465.64px;top:381.51px;font-size:11px;color:#000;">103.40</span>
<div class="b" style="left:12px;top:393.84000000000003px;width:490.5px;height:15.52px;background:#f2f2f4;"></div>
<span class="t" style="left:59.75px;top:397.03px;font-size:11px;color:#000;">19</span>
<span class="t" style="left:77.90px;top:397.03px;font-size:11px;color:#000;transform:scaleX(1.0568);transform-origin:0 0;">26.3.2010 г.</span>
<span class="t" style="left:199.60px;top:397.03px;font-size:11px;color:#000;transform:scaleX(0.9902);transform-origin:0 0;">По сметка</span>
<span class="t" style="left:259.70px;top:397.03px;font-size:11px;color:#000;">Ресторант</span>
<span class="t" style="left:412.18px;top:397.03px;font-size:11px;color:#000;">0.00</span>
<span class="t" style="left:465.64px;top:397.03px;font-size:11px;color:#000;">718.90</span>
<span class="t" style="left:59.75px;top:412.55px;font-size:11px;color:#000;">19</span>
<span class="t" style="left:199.60px;top:412.55px;font-size:11px;color:#000;transform:scaleX(0.9522);transform-origin:0 0;">В брой</span>
<span class="t" style="left:259.70px;top:412.55px;font-size:11px;color:#000;">Ресторант</span>
<span class="t" style="left:390.77px;top:412.55px;font-size:11px;color:#000;">1 061.40</span>
<span class="t" style="left:456.47px;top:412.55px;font-size:11px;color:#000;">1 061.40</span>
<div class="b" style="left:12px;top:424.88px;width:490.5px;height:15.52px;background:#f2f2f4;"></div>
<span class="t" style="left:59.75px;top:428.07px;font-size:11px;color:#000;">23</span>
<span class="t" style="left:77.90px;top:428.07px;font-size:11px;color:#000;transform:scaleX(1.0568);transform-origin:0 0;">27.3.2010 г.</span>
<span class="t" style="left:199.60px;top:428.07px;font-size:11px;color:#000;transform:scaleX(0.9902);transform-origin:0 0;">По сметка</span>
<span class="t" style="left:259.70px;top:428.07px;font-size:11px;color:#000;">Ресторант</span>
<span class="t" style="left:412.18px;top:428.07px;font-size:11px;color:#000;">0.00</span>
<span class="t" style="left:465.64px;top:428.07px;font-size:11px;color:#000;">997.21</span>
<span class="t" style="left:59.75px;top:443.59px;font-size:11px;color:#000;">23</span>
<span class="t" style="left:199.60px;top:443.59px;font-size:11px;color:#000;transform:scaleX(0.9522);transform-origin:0 0;">В брой</span>
<span class="t" style="left:259.70px;top:443.59px;font-size:11px;color:#000;">Ресторант</span>
<span class="t" style="left:399.94px;top:443.59px;font-size:11px;color:#000;">899.55</span>
<span class="t" style="left:465.64px;top:443.59px;font-size:11px;color:#000;">891.55</span>
<div class="b" style="left:12px;top:455.91999999999996px;width:490.5px;height:15.52px;background:#f2f2f4;"></div>
<span class="t" style="left:59.75px;top:459.11px;font-size:11px;color:#000;">26</span>
<span class="t" style="left:77.90px;top:459.11px;font-size:11px;color:#000;transform:scaleX(1.0568);transform-origin:0 0;">28.3.2010 г.</span>
<span class="t" style="left:199.60px;top:459.11px;font-size:11px;color:#000;transform:scaleX(0.9902);transform-origin:0 0;">По сметка</span>
<span class="t" style="left:259.70px;top:459.11px;font-size:11px;color:#000;">Ресторант</span>
<span class="t" style="left:399.94px;top:459.11px;font-size:11px;color:#000;">106.20</span>
<span class="t" style="left:465.64px;top:459.11px;font-size:11px;color:#000;">741.28</span>
<span class="t" style="left:59.75px;top:474.63px;font-size:11px;color:#000;">26</span>
<span class="t" style="left:199.60px;top:474.63px;font-size:11px;color:#000;transform:scaleX(0.9522);transform-origin:0 0;">В брой</span>
<span class="t" style="left:259.70px;top:474.63px;font-size:11px;color:#000;">Ресторант</span>
<span class="t" style="left:399.94px;top:474.63px;font-size:11px;color:#000;">851.35</span>
<span class="t" style="left:465.64px;top:474.63px;font-size:11px;color:#000;">851.35</span>
<div class="b" style="left:12px;top:486.96000000000004px;width:490.5px;height:15.52px;background:#f2f2f4;"></div>
<span class="t" style="left:59.75px;top:490.15px;font-size:11px;color:#000;">31</span>
<span class="t" style="left:77.90px;top:490.15px;font-size:11px;color:#000;transform:scaleX(1.0568);transform-origin:0 0;">29.3.2010 г.</span>
<span class="t" style="left:199.60px;top:490.15px;font-size:11px;color:#000;transform:scaleX(0.9902);transform-origin:0 0;">По сметка</span>
<span class="t" style="left:259.70px;top:490.15px;font-size:11px;color:#000;">Ресторант</span>
<span class="t" style="left:412.18px;top:490.15px;font-size:11px;color:#000;">0.00</span>
<span class="t" style="left:471.77px;top:490.15px;font-size:11px;color:#000;">89.31</span>
<span class="t" style="left:59.75px;top:505.67px;font-size:11px;color:#000;">31</span>
<span class="t" style="left:199.60px;top:505.67px;font-size:11px;color:#000;transform:scaleX(0.9522);transform-origin:0 0;">В брой</span>
<span class="t" style="left:259.70px;top:505.67px;font-size:11px;color:#000;">Ресторант</span>
<span class="t" style="left:399.94px;top:505.67px;font-size:11px;color:#000;">133.45</span>
<span class="t" style="left:465.64px;top:505.67px;font-size:11px;color:#000;">133.45</span>
<div class="b" style="left:12px;top:518.0px;width:490.5px;height:15.52px;background:#f2f2f4;"></div>
<span class="t" style="left:59.75px;top:521.19px;font-size:11px;color:#000;">33</span>
<span class="t" style="left:77.90px;top:521.19px;font-size:11px;color:#000;transform:scaleX(1.0568);transform-origin:0 0;">30.3.2010 г.</span>
<span class="t" style="left:199.60px;top:521.19px;font-size:11px;color:#000;transform:scaleX(0.9902);transform-origin:0 0;">По сметка</span>
<span class="t" style="left:259.70px;top:521.19px;font-size:11px;color:#000;">Ресторант</span>
<span class="t" style="left:412.18px;top:521.19px;font-size:11px;color:#000;">0.00</span>
<span class="t" style="left:471.77px;top:521.19px;font-size:11px;color:#000;">55.65</span>
<span class="t" style="left:59.75px;top:536.71px;font-size:11px;color:#000;">33</span>
<span class="t" style="left:199.60px;top:536.71px;font-size:11px;color:#000;transform:scaleX(0.9522);transform-origin:0 0;">В брой</span>
<span class="t" style="left:259.70px;top:536.71px;font-size:11px;color:#000;">Ресторант</span>
<span class="t" style="left:406.07px;top:536.71px;font-size:11px;color:#000;">22.90</span>
<span class="t" style="left:471.77px;top:536.71px;font-size:11px;color:#000;">22.90</span>
<div class="b" style="left:12px;top:549.04px;width:490.5px;height:15.52px;background:#f2f2f4;"></div>
<span class="t" style="left:59.75px;top:552.23px;font-size:11px;color:#000;">36</span>
<span class="t" style="left:77.90px;top:552.23px;font-size:11px;color:#000;transform:scaleX(1.0568);transform-origin:0 0;">31.3.2010 г.</span>
<span class="t" style="left:199.60px;top:552.23px;font-size:11px;color:#000;transform:scaleX(0.9902);transform-origin:0 0;">По сметка</span>
<span class="t" style="left:259.70px;top:552.23px;font-size:11px;color:#000;">Ресторант</span>
<span class="t" style="left:412.18px;top:552.23px;font-size:11px;color:#000;">0.00</span>
<span class="t" style="left:471.77px;top:552.23px;font-size:11px;color:#000;">79.97</span>
<span class="t" style="left:59.75px;top:567.75px;font-size:11px;color:#000;">36</span>
<span class="t" style="left:199.60px;top:567.75px;font-size:11px;color:#000;transform:scaleX(0.9522);transform-origin:0 0;">В брой</span>
<span class="t" style="left:259.70px;top:567.75px;font-size:11px;color:#000;">Ресторант</span>
<span class="t" style="left:399.94px;top:567.75px;font-size:11px;color:#000;">120.35</span>
<span class="t" style="left:465.64px;top:567.75px;font-size:11px;color:#000;">120.35</span>
<div class="b" style="left:12px;top:702.3px;width:490.5px;height:17.4px;background:#fdfaee;"></div>
<div class="b" style="left:12px;top:701.8px;width:490.5px;height:1px;background:#d4d4d8;"></div>
<div class="b" style="left:75.9px;top:191.5px;width:1px;height:528px;background:#e2e2e5;"></div>
<div class="b" style="left:75.9px;top:191.5px;width:1px;height:16.1px;background:#ddd9c9;"></div>
<div class="b" style="left:75.9px;top:702.3px;width:1px;height:17.4px;background:#ddd9c9;"></div>
<div class="b" style="left:75.9px;top:223.12px;width:1px;height:15.52px;background:#e2e2f6;"></div>
<div class="b" style="left:198.2px;top:191.5px;width:1px;height:528px;background:#e2e2e5;"></div>
<div class="b" style="left:198.2px;top:191.5px;width:1px;height:16.1px;background:#ddd9c9;"></div>
<div class="b" style="left:198.2px;top:702.3px;width:1px;height:17.4px;background:#ddd9c9;"></div>
<div class="b" style="left:198.2px;top:223.12px;width:1px;height:15.52px;background:#e2e2f6;"></div>
<div class="b" style="left:357.0px;top:191.5px;width:1px;height:528px;background:#e2e2e5;"></div>
<div class="b" style="left:357.0px;top:191.5px;width:1px;height:16.1px;background:#ddd9c9;"></div>
<div class="b" style="left:357.0px;top:702.3px;width:1px;height:17.4px;background:#ddd9c9;"></div>
<div class="b" style="left:357.0px;top:223.12px;width:1px;height:15.52px;background:#e2e2f6;"></div>
<div class="b" style="left:437.2px;top:191.5px;width:1px;height:528px;background:#e2e2e5;"></div>
<div class="b" style="left:437.2px;top:191.5px;width:1px;height:16.1px;background:#ddd9c9;"></div>
<div class="b" style="left:437.2px;top:702.3px;width:1px;height:17.4px;background:#ddd9c9;"></div>
<div class="b" style="left:437.2px;top:223.12px;width:1px;height:15.52px;background:#e2e2f6;"></div>
<div class="b" style="left:502.1px;top:191.5px;width:1px;height:528px;background:#e2e2e5;"></div>
<div class="b" style="left:502.1px;top:191.5px;width:1px;height:16.1px;background:#ddd9c9;"></div>
<div class="b" style="left:502.1px;top:702.3px;width:1px;height:17.4px;background:#ddd9c9;"></div>
<div class="b" style="left:12px;top:579.58px;width:490.5px;height:1px;background:#e1e1e6;"></div>
<div class="b" style="left:11.5px;top:174px;width:1px;height:17px;background:#fbfaf4;"></div>
<div class="b" style="left:75.4px;top:176px;width:1px;height:12px;background:#c5c2b0;"></div>
<div class="b" style="left:76.4px;top:176px;width:1px;height:12px;background:#fff;"></div>
<div class="b" style="left:197.7px;top:176px;width:1px;height:12px;background:#c5c2b0;"></div>
<div class="b" style="left:198.7px;top:176px;width:1px;height:12px;background:#fff;"></div>
<div class="b" style="left:356.5px;top:176px;width:1px;height:12px;background:#c5c2b0;"></div>
<div class="b" style="left:357.5px;top:176px;width:1px;height:12px;background:#fff;"></div>
<div class="b" style="left:436.7px;top:176px;width:1px;height:12px;background:#c5c2b0;"></div>
<div class="b" style="left:437.7px;top:176px;width:1px;height:12px;background:#fff;"></div>
<div class="b" style="left:501.5px;top:174px;width:1px;height:17.5px;background:#c5c2b0;"></div>
<span class="t" style="left:13.20px;top:176.69px;font-size:11px;color:#000;transform:scaleX(1.0626);transform-origin:0 0;">Отчет №</span>
<span class="t" style="left:78.70px;top:176.69px;font-size:11px;color:#000;transform:scaleX(1.0442);transform-origin:0 0;">Отчет дата</span>
<div class="b" style="left:198.5px;top:174px;width:59.7px;height:17px;overflow:hidden;"><span class="t" style="left:2.30px;top:2.69px;font-size:11px;color:#000;transform:scaleX(0.9664);transform-origin:0 0;">Вид плащане</span></div>
<span class="t" style="left:261.30px;top:176.69px;font-size:11px;color:#000;transform:scaleX(0.9722);transform-origin:0 0;">Заведение</span>
<span class="t" style="left:359.70px;top:176.69px;font-size:11px;color:#000;transform:scaleX(0.9217);transform-origin:0 0;">Сума ФП</span>
<span class="t" style="left:439.80px;top:176.69px;font-size:11px;color:#000;transform:scaleX(0.8884);transform-origin:0 0;">Сума</span>
<svg style="left:185px;top:179px" width="10" height="8" viewBox="0 0 10 8"><path d="M0.5 0.5 H8.5 L4.5 7 Z" fill="none" stroke="#aca899" stroke-width="1"/></svg>
<div class="b" style="left:0px;top:191.07999999999998px;width:11px;height:1px;background:#c5c2b0;"></div>
<div class="b" style="left:0px;top:192.07999999999998px;width:11px;height:1px;background:#fff;"></div>
<div class="b" style="left:0px;top:206.6px;width:11px;height:1px;background:#c5c2b0;"></div>
<div class="b" style="left:0px;top:207.6px;width:11px;height:1px;background:#fff;"></div>
<div class="b" style="left:0px;top:222.12px;width:11px;height:1px;background:#c5c2b0;"></div>
<div class="b" style="left:0px;top:223.12px;width:11px;height:1px;background:#fff;"></div>
<div class="b" style="left:0px;top:237.64px;width:11px;height:1px;background:#c5c2b0;"></div>
<div class="b" style="left:0px;top:238.64px;width:11px;height:1px;background:#fff;"></div>
<div class="b" style="left:0px;top:253.16px;width:11px;height:1px;background:#c5c2b0;"></div>
<div class="b" style="left:0px;top:254.16px;width:11px;height:1px;background:#fff;"></div>
<div class="b" style="left:0px;top:268.68px;width:11px;height:1px;background:#c5c2b0;"></div>
<div class="b" style="left:0px;top:269.68px;width:11px;height:1px;background:#fff;"></div>
<div class="b" style="left:0px;top:284.2px;width:11px;height:1px;background:#c5c2b0;"></div>
<div class="b" style="left:0px;top:285.2px;width:11px;height:1px;background:#fff;"></div>
<div class="b" style="left:0px;top:299.72px;width:11px;height:1px;background:#c5c2b0;"></div>
<div class="b" style="left:0px;top:300.72px;width:11px;height:1px;background:#fff;"></div>
<div class="b" style="left:0px;top:315.24px;width:11px;height:1px;background:#c5c2b0;"></div>
<div class="b" style="left:0px;top:316.24px;width:11px;height:1px;background:#fff;"></div>
<div class="b" style="left:0px;top:330.76px;width:11px;height:1px;background:#c5c2b0;"></div>
<div class="b" style="left:0px;top:331.76px;width:11px;height:1px;background:#fff;"></div>
<div class="b" style="left:0px;top:346.28px;width:11px;height:1px;background:#c5c2b0;"></div>
<div class="b" style="left:0px;top:347.28px;width:11px;height:1px;background:#fff;"></div>
<div class="b" style="left:0px;top:361.79999999999995px;width:11px;height:1px;background:#c5c2b0;"></div>
<div class="b" style="left:0px;top:362.79999999999995px;width:11px;height:1px;background:#fff;"></div>
<div class="b" style="left:0px;top:377.32px;width:11px;height:1px;background:#c5c2b0;"></div>
<div class="b" style="left:0px;top:378.32px;width:11px;height:1px;background:#fff;"></div>
<div class="b" style="left:0px;top:392.84000000000003px;width:11px;height:1px;background:#c5c2b0;"></div>
<div class="b" style="left:0px;top:393.84000000000003px;width:11px;height:1px;background:#fff;"></div>
<div class="b" style="left:0px;top:408.36px;width:11px;height:1px;background:#c5c2b0;"></div>
<div class="b" style="left:0px;top:409.36px;width:11px;height:1px;background:#fff;"></div>
<div class="b" style="left:0px;top:423.88px;width:11px;height:1px;background:#c5c2b0;"></div>
<div class="b" style="left:0px;top:424.88px;width:11px;height:1px;background:#fff;"></div>
<div class="b" style="left:0px;top:439.4px;width:11px;height:1px;background:#c5c2b0;"></div>
<div class="b" style="left:0px;top:440.4px;width:11px;height:1px;background:#fff;"></div>
<div class="b" style="left:0px;top:454.91999999999996px;width:11px;height:1px;background:#c5c2b0;"></div>
<div class="b" style="left:0px;top:455.91999999999996px;width:11px;height:1px;background:#fff;"></div>
<div class="b" style="left:0px;top:470.43999999999994px;width:11px;height:1px;background:#c5c2b0;"></div>
<div class="b" style="left:0px;top:471.43999999999994px;width:11px;height:1px;background:#fff;"></div>
<div class="b" style="left:0px;top:485.96000000000004px;width:11px;height:1px;background:#c5c2b0;"></div>
<div class="b" style="left:0px;top:486.96000000000004px;width:11px;height:1px;background:#fff;"></div>
<div class="b" style="left:0px;top:501.48px;width:11px;height:1px;background:#c5c2b0;"></div>
<div class="b" style="left:0px;top:502.48px;width:11px;height:1px;background:#fff;"></div>
<div class="b" style="left:0px;top:517.0px;width:11px;height:1px;background:#c5c2b0;"></div>
<div class="b" style="left:0px;top:518.0px;width:11px;height:1px;background:#fff;"></div>
<div class="b" style="left:0px;top:532.52px;width:11px;height:1px;background:#c5c2b0;"></div>
<div class="b" style="left:0px;top:533.52px;width:11px;height:1px;background:#fff;"></div>
<div class="b" style="left:0px;top:548.04px;width:11px;height:1px;background:#c5c2b0;"></div>
<div class="b" style="left:0px;top:549.04px;width:11px;height:1px;background:#fff;"></div>
<div class="b" style="left:0px;top:563.56px;width:11px;height:1px;background:#c5c2b0;"></div>
<div class="b" style="left:0px;top:564.56px;width:11px;height:1px;background:#fff;"></div>
<div class="b" style="left:0px;top:579.08px;width:11px;height:1px;background:#c5c2b0;"></div>
<div class="b" style="left:0px;top:580.08px;width:11px;height:1px;background:#fff;"></div>
<div class="b" style="left:0px;top:700.8px;width:11px;height:1px;background:#c5c2b0;"></div>
<div class="b" style="left:0px;top:701.8px;width:11px;height:1px;background:#fff;"></div>
<div class="b" style="left:10.6px;top:173.5px;width:0.9px;height:546.2px;background:#8f8c7f;"></div>
<svg style="left:2.8px;top:224.88px" width="7" height="12" viewBox="0 0 7 12"><path d="M0 0 L6.6 6 L0 12 Z" fill="#000"/></svg>
<span class="t" style="left:200.50px;top:707.09px;font-size:11px;color:#000;">Общо: 24</span>
<span class="t" style="left:390.47px;top:707.09px;font-size:11px;color:#000;">3 932.60</span>
<span class="t" style="left:454.97px;top:707.09px;font-size:11px;color:#000;">7 047.85</span>
<div class="b" style="left:0px;top:719.7px;width:518px;height:5px;background:#eeeee9;"></div>
<div class="b" style="left:0px;top:719.7px;width:69px;height:5px;background:#f4f4f5;"></div>
<div class="b" style="left:68.7px;top:721px;width:205.5px;height:6px;border:1.3px solid #4f5f78;border-radius:3px 3px 0 0;background:#fff;"></div>
<div class="b" style="left:276px;top:720.5px;width:1px;height:4px;background:#555;"></div>
</body></html>
